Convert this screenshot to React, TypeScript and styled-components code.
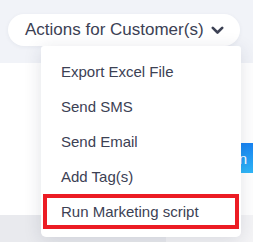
import React from "react";
import styled, { createGlobalStyle } from "styled-components";

const Global = createGlobalStyle`
  html, body { margin: 0; padding: 0; }
  body {
    width: 253px;
    height: 242px;
    overflow: hidden;
    font-family: "Liberation Sans", Arial, sans-serif;
    background: #ffffff;
  }
`;

const Page = styled.div`
  position: relative;
  width: 253px;
  height: 242px;
  overflow: hidden;
  display: grid;
  grid-template-rows: 63px 152px 27px;
`;

const TopBar = styled.div`
  background: #f1f3f8;
  padding: 14px 0 0 8px;
`;

const ActionButton = styled.button`
  box-sizing: border-box;
  width: 232px;
  height: 32px;
  border: none;
  border-radius: 16px;
  background: #ffffff;
  box-shadow: 0 1px 4px rgba(40, 50, 90, 0.06);
  display: flex;
  align-items: center;
  gap: 7px;
  padding: 0 0 0 17px;
  font-family: "Liberation Sans", Arial, sans-serif;
  font-size: 17px;
  color: #3c4154;
  cursor: pointer;
`;

const Content = styled.div`
  background: #ffffff;
  display: flex;
  justify-content: flex-end;
  align-items: flex-start;
  padding-top: 80px;
  overflow: hidden;
`;

const PrimaryButton = styled.button`
  flex: none;
  height: 30px;
  margin-right: -10px;
  border: none;
  border-radius: 3px;
  padding: 0 16px;
  background: linear-gradient(180deg, #1883f2 0%, #2fb7f8 100%);
  color: #ffffff;
  font-family: "Liberation Sans", Arial, sans-serif;
  font-size: 15px;
`;

const BottomStrip = styled.div`
  display: grid;
  grid-template-columns: 166px 1fr;
`;

const StripCell = styled.div<{ $tone: "dark" | "light" }>`
  background: ${(p) => (p.$tone === "dark" ? "#e9eaee" : "#f4f4f6")};
`;

const Menu = styled.ul`
  position: absolute;
  top: 46px;
  left: 41px;
  width: 200px;
  box-sizing: border-box;
  margin: 0;
  padding: 8px 0;
  list-style: none;
  background: #ffffff;
  border-radius: 3px 3px 5px 5px;
  box-shadow: 0 3px 18px rgba(30, 40, 70, 0.13);
`;

const MenuItem = styled.li<{ $marked?: boolean }>`
  box-sizing: border-box;
  height: 35px;
  display: flex;
  align-items: center;
  padding-left: ${(p) => (p.$marked ? "14px" : "20px")};
  margin: ${(p) => (p.$marked ? "0 2px" : "0")};
  border: ${(p) => (p.$marked ? "4px solid #ec1c24" : "none")};
  font-size: 15px;
  color: #3c4154;
  cursor: pointer;
`;

const Chevron = () => (
  <svg width="13" height="9" viewBox="0 0 13 9" aria-hidden="true">
    <path
      d="M1.8 1.8 L6.5 6.5 L11.2 1.8"
      fill="none"
      stroke="#3c4154"
      strokeWidth="2.6"
      strokeLinecap="round"
      strokeLinejoin="round"
    />
  </svg>
);

const items = [
  "Export Excel File",
  "Send SMS",
  "Send Email",
  "Add Tag(s)",
  "Run Marketing script",
];

export default function App() {
  return (
    <>
      <Global />
      <Page>
        <TopBar>
          <ActionButton>
            Actions for Customer(s)
            <Chevron />
          </ActionButton>
        </TopBar>
        <Content>
          <PrimaryButton>Campaign</PrimaryButton>
        </Content>
        <BottomStrip>
          <StripCell $tone="dark" />
          <StripCell $tone="light" />
        </BottomStrip>
        <Menu>
          {items.map((label, i) => (
            <MenuItem key={label} $marked={i === items.length - 1}>
              {label}
            </MenuItem>
          ))}
        </Menu>
      </Page>
    </>
  );
}
